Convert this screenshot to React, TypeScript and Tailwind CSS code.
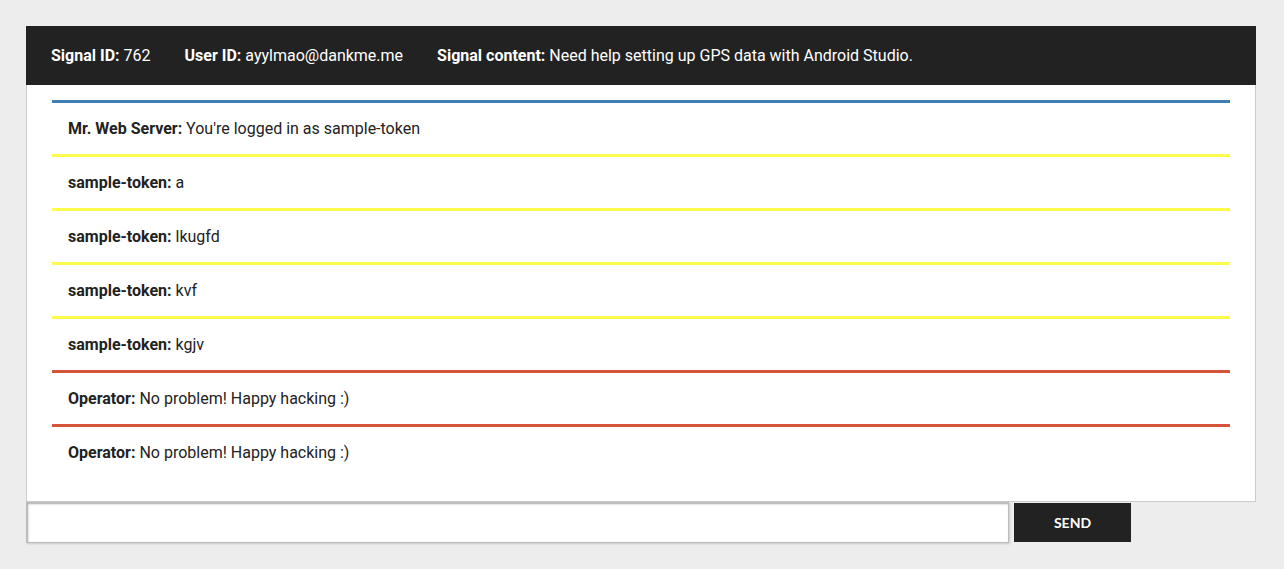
import React from "react";

const rows: { name: string; text: string; color: string }[] = [
  { name: "Mr. Web Server:", text: "You're logged in as sample-token", color: "border-[#3f7fb6]" },
  { name: "sample-token:", text: "a", color: "border-[#fdfb4b]" },
  { name: "sample-token:", text: "lkugfd", color: "border-[#fdfb4b]" },
  { name: "sample-token:", text: "kvf", color: "border-[#fdfb4b]" },
  { name: "sample-token:", text: "kgjv", color: "border-[#fdfb4b]" },
  { name: "Operator:", text: "No problem! Happy hacking :)", color: "border-[#d5543a]" },
  { name: "Operator:", text: "No problem! Happy hacking :)", color: "border-[#d5543a]" },
];

export default function App() {
  return (
    <div className="min-h-[569px] w-full bg-[#ededed] pl-[26px] pt-[26px] font-['Roboto',sans-serif] text-[#222]">
      <div className="w-[1230px]">
        <div className="flex h-[59px] items-center gap-[34px] bg-[#222] px-[25px] text-[16px] text-white">
          <span>
            <b className="font-bold">Signal ID:</b> 762
          </span>
          <span>
            <b className="font-bold">User ID:</b> ayylmao@dankme.me
          </span>
          <span>
            <b className="font-bold">Signal content:</b> Need help setting up GPS data with Android Studio.
          </span>
        </div>
        <div className="border border-t-0 border-[#ccc] bg-white px-[25px] pb-[23px] pt-[15px]">
          {rows.map((r, i) => (
            <div key={i} className={`border-t-[3px] ${r.color} px-[16px] py-[16px] text-[16px] leading-[19px]`}>
              <b className="font-bold">{r.name}</b> {r.text}
            </div>
          ))}
        </div>
        <div className="flex items-start">
          <input
            type="text"
            className="h-[41px] w-[983px] border border-[#bbb] bg-white shadow-[inset_1px_1px_2px_rgba(0,0,0,0.35),1px_1px_2px_rgba(0,0,0,0.15)] outline-none"
          />
          <button className="ml-[5px] mt-[1px] h-[39px] w-[117px] bg-[#222] font-['Lato',sans-serif] text-[14px] font-bold text-white">
            SEND
          </button>
        </div>
      </div>
    </div>
  );
}
